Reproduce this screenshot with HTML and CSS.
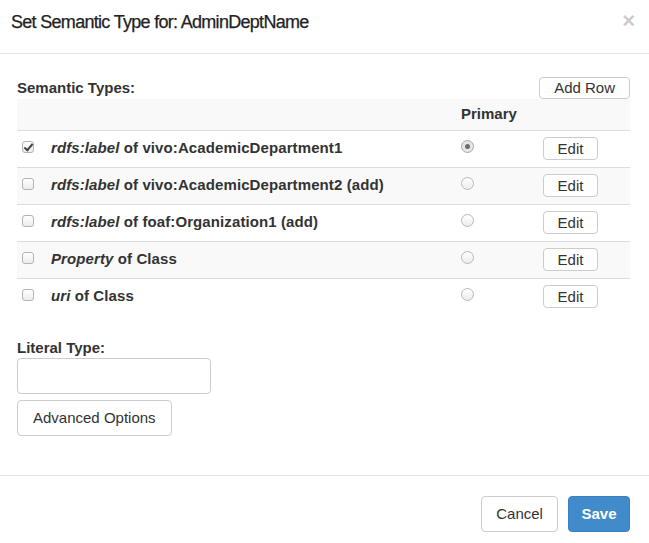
FILE: index.html
```html
<!DOCTYPE html>
<html>
<head>
<meta charset="utf-8">
<link rel="stylesheet" href="styles.css">
</head>
<body>
<div class="modal">
  <div class="modal-header">
    <h4 class="modal-title">Set Semantic Type for: AdminDeptName</h4>
    <button class="close" type="button">×</button>
  </div>
  <div class="modal-body">
    <div class="types-head">
      <span class="field-label">Semantic Types:</span>
      <button class="btn btn-sm" type="button">Add Row</button>
    </div>
    <table class="types">
      <thead>
        <tr><th class="c-check"></th><th class="c-name"></th><th class="c-primary">Primary</th><th class="c-edit"></th></tr>
      </thead>
      <tbody>
        <tr>
          <td class="c-check"><input type="checkbox" class="chk" checked></td>
          <td class="c-name"><em>rdfs:label</em> of vivo:AcademicDepartment1</td>
          <td class="c-primary"><input type="radio" name="primary" class="rad" checked></td>
          <td class="c-edit"><button class="btn btn-sm btn-edit" type="button">Edit</button></td>
        </tr>
        <tr class="striped">
          <td class="c-check"><input type="checkbox" class="chk"></td>
          <td class="c-name"><em>rdfs:label</em> of vivo:AcademicDepartment2 (add)</td>
          <td class="c-primary"><input type="radio" name="primary" class="rad"></td>
          <td class="c-edit"><button class="btn btn-sm btn-edit" type="button">Edit</button></td>
        </tr>
        <tr>
          <td class="c-check"><input type="checkbox" class="chk"></td>
          <td class="c-name"><em>rdfs:label</em> of foaf:Organization1 (add)</td>
          <td class="c-primary"><input type="radio" name="primary" class="rad"></td>
          <td class="c-edit"><button class="btn btn-sm btn-edit" type="button">Edit</button></td>
        </tr>
        <tr class="striped">
          <td class="c-check"><input type="checkbox" class="chk"></td>
          <td class="c-name"><em>Property</em> of Class</td>
          <td class="c-primary"><input type="radio" name="primary" class="rad"></td>
          <td class="c-edit"><button class="btn btn-sm btn-edit" type="button">Edit</button></td>
        </tr>
        <tr>
          <td class="c-check"><input type="checkbox" class="chk"></td>
          <td class="c-name"><em>uri</em> of Class</td>
          <td class="c-primary"><input type="radio" name="primary" class="rad"></td>
          <td class="c-edit"><button class="btn btn-sm btn-edit" type="button">Edit</button></td>
        </tr>
      </tbody>
    </table>
    <div class="literal">
      <label class="field-label">Literal Type:</label>
      <input type="text" class="text-input">
      <button class="btn btn-default btn-adv" type="button">Advanced Options</button>
    </div>
  </div>
  <div class="modal-footer">
    <button class="btn btn-default btn-cancel" type="button">Cancel</button>
    <button class="btn btn-primary" type="button">Save</button>
  </div>
</div>
</body>
</html>
```

FILE: styles.css
```css
* { box-sizing: border-box; }

html, body {
  margin: 0;
  padding: 0;
  background: #fff;
}

body {
  font-family: "Liberation Sans", Arial, Helvetica, sans-serif;
  font-size: 15px;
  line-height: 21px;
  color: #333;
}

.modal {
  width: 649px;
  height: 543px;
  display: flex;
  flex-direction: column;
}

.modal-header {
  height: 54px;
  border-bottom: 1px solid #e5e5e5;
  display: flex;
  justify-content: space-between;
  align-items: flex-start;
  padding: 9px 14px 0 11px;
}

.modal-title {
  margin: 0;
  font-size: 18px;
  line-height: 26px;
  font-weight: normal;
  letter-spacing: -0.7px;
  color: #222;
  -webkit-text-stroke: 0.25px #222;
}

.close {
  border: 0;
  background: none;
  padding: 0;
  margin-top: 1px;
  font-family: "Liberation Sans", Arial, sans-serif;
  font-size: 22px;
  font-weight: bold;
  line-height: 21px;
  color: #000;
  opacity: 0.2;
  cursor: pointer;
}

.modal-body {
  height: 422px;
  border-bottom: 1px solid #e5e5e5;
  padding: 22px 19px 0 17px;
}

.types-head {
  display: flex;
  justify-content: space-between;
  align-items: flex-end;
  height: 23px;
}

.field-label {
  font-weight: bold;
  display: block;
  line-height: 21px;
}

.types-head .field-label {
  margin-bottom: 1px;
}

.btn {
  font-family: "Liberation Sans", Arial, Helvetica, sans-serif;
  font-size: 15px;
  color: #333;
  background: #fff;
  border: 1px solid #ccc;
  border-radius: 4px;
  cursor: pointer;
}

.btn-sm {
  height: 22px;
  line-height: 20px;
  padding: 0 14px;
}

.btn-edit {
  height: 23px;
  line-height: 21px;
  width: 55px;
  padding: 0;
}

.types {
  width: 613px;
  border-collapse: collapse;
  border-spacing: 0;
}

.types thead tr {
  height: 31px;
  background: #f9f9f9;
  border-bottom: 1px solid #ddd;
}

.types th {
  text-align: left;
  font-weight: bold;
  padding: 0 0 1px 0;
  vertical-align: middle;
}

.types tbody tr {
  height: 37px;
  border-bottom: 1px solid #ddd;
}

.types tbody tr:last-child {
  border-bottom: 0;
}

.types tbody tr.striped {
  background: #f9f9f9;
}

.types td {
  padding: 0;
  vertical-align: middle;
}

.c-check {
  width: 26px;
  padding-left: 5px !important;
}

.c-name {
  width: 410px;
  padding-left: 8px !important;
  font-weight: bold;
  letter-spacing: 0.1px;
}

.types td.c-name {
  padding-bottom: 3px;
}

.c-name em {
  font-style: italic;
}

.c-primary {
  width: 82px;
  padding-left: 8px !important;
}

.c-edit {
  width: 95px;
  padding-left: 8px !important;
}

.chk {
  appearance: none;
  -webkit-appearance: none;
  display: block;
  width: 12px;
  height: 12px;
  margin: 0 0 3px 0;
  border: 1px solid #b3b3b3;
  border-radius: 3px;
  background: linear-gradient(#fff, #ececec);
  position: relative;
}

.chk:checked::after {
  content: "";
  position: absolute;
  left: 3px;
  top: 0px;
  width: 3px;
  height: 7px;
  border: solid #444;
  border-width: 0 2px 2px 0;
  transform: rotate(40deg);
}

.rad {
  appearance: none;
  -webkit-appearance: none;
  display: block;
  width: 13px;
  height: 13px;
  margin: 0 0 4px 0;
  border: 1px solid #b8b8b8;
  border-radius: 50%;
  background: linear-gradient(#fff, #ececec);
  position: relative;
}

.rad:checked {
  background: #e6e6e6;
  border-color: #a8a8a8;
}

.rad:checked::after {
  content: "";
  position: absolute;
  left: 3px;
  top: 3px;
  width: 5px;
  height: 5px;
  border-radius: 50%;
  background: #6c6c6c;
}

.literal {
  margin-top: 22px;
}

.text-input {
  display: block;
  width: 194px;
  height: 36px;
  border: 1px solid #ccc;
  border-radius: 4px;
  margin: 0;
  padding: 6px 12px;
  font-family: inherit;
  font-size: 15px;
}

.btn-default {
  height: 36px;
  line-height: 34px;
  padding: 0 14px;
}

.btn-adv {
  display: block;
  margin-top: 6px;
  padding: 0 15px;
}

.btn-cancel {
  padding: 0 14px;
}

.modal-footer {
  display: flex;
  justify-content: flex-end;
  gap: 10px;
  padding: 20px 19px 0 0;
}

.btn-primary {
  height: 36px;
  line-height: 34px;
  padding: 0 12.5px;
  background: #428bca;
  border-color: #3b7fc0;
  color: #fff;
  font-weight: bold;
}
```
